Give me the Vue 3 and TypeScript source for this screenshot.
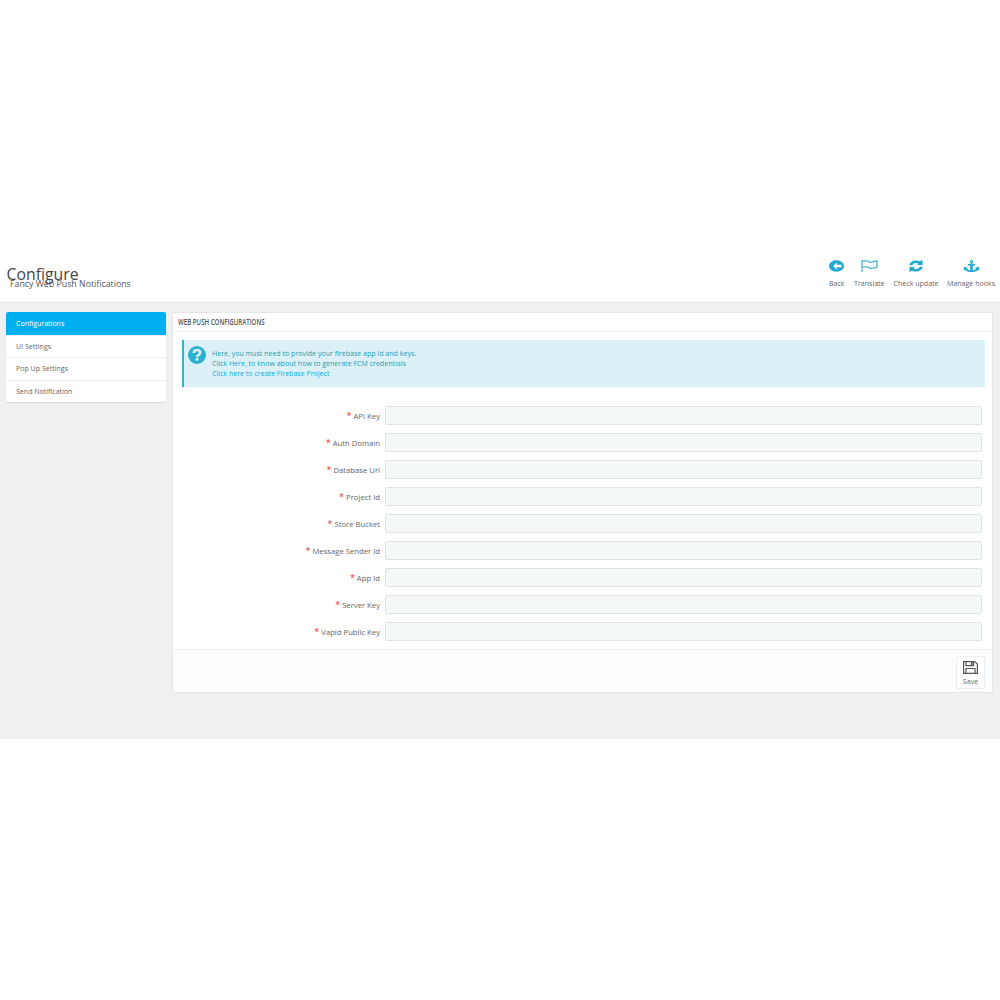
<script setup lang="ts">
const tabs: string[] = ['Configurations', 'UI Settings', 'Pop Up Settings', 'Send Notification']
const fields: string[] = ['API Key', 'Auth Domain', 'Database Url', 'Project Id', 'Store Bucket', 'Message Sender Id', 'App Id', 'Server Key', 'Vapid Public Key']
</script>

<template>
  <div class="page">
    <header class="head">
      <div class="titles">
        <h1>Configure</h1>
        <h2>Fancy Web Push Notifications</h2>
      </div>
      <nav class="actions">
        <a class="act back">
          <svg width="15" height="12" viewBox="0 0 15 12"><path fill="#25a9cf" fill-rule="evenodd" d="M7.500.3c4.200 0 7.500 2.500 7.500 5.700s-3.300 5.700-7.500 5.700S0 9.200 0 6 3.300.3 7.500.3zM7.800 2.600 4.200 6l3.600 3.400V7.300h4.700V4.700H7.800z"/></svg>
          <span>Back</span>
        </a>
        <a class="act translate">
          <svg class="flag" width="17" height="12" viewBox="0 0 17 12"><path fill="none" stroke="#25a9cf" stroke-width="1.100" d="M1 0v12M1 1h6l2 1.500L16 1v6.500l-7 1-2-1.500H1"/></svg>
          <span>Translate</span>
        </a>
        <a class="act check">
          <svg width="16" height="12" viewBox="0 0 16 12"><path fill="#25a9cf" d="M1 5.200C2 2 4.500.4 8 .4c1.700 0 3 .3 4 .9L14.500.1V5H9l1.600-1.400C9.900 3.200 9 3 8 3 6.200 3 5 3.800 4.300 5.200zM15 6.800c-1 3.200-3.500 4.800-7 4.800-1.700 0-3-.3-4-.9L1.500 11.900V7h5.500L5.400 8.400c.7.400 1.600.6 2.600.6 1.800 0 3-.8 3.700-2.200z"/></svg>
          <span>Check update</span>
        </a>
        <a class="act hooks">
          <svg width="17" height="12" viewBox="0 0 17 12"><path fill="#25a9cf" fill-rule="evenodd" d="M8.500 0a1.500 1.500 0 0 1 1 2.700V4H12v1.500H9.800v4.700c1.400-.1 2.600-.7 3.300-1.500L12 7.800 16 6.700l.5 3.800-1.200-.8C14 11.100 11.500 12 8.500 12s-5.500-.9-6.800-2.300l-1.200.8L1 6.700 5 7.800 3.900 8.700c.7.800 1.900 1.400 3.300 1.500V5.500H5V4h2.500V2.700A1.500 1.500 0 0 1 8.500 0zm0 .9a.6.6 0 1 0 0 1.200.6.6 0 0 0 0-1.200z"/></svg>
          <span>Manage hooks</span>
        </a>
      </nav>
    </header>

    <main class="body">
      <ul class="tabs">
        <li v-for="(t, i) in tabs" :key="t" :class="{ active: i === 0 }">{{ t }}</li>
      </ul>

      <section class="panel">
        <h3 class="panel-head"><span>Web Push Configurations</span></h3>
        <div class="alert">
          <svg class="q" width="18" height="18" viewBox="0 0 18 18"><circle cx="9" cy="9" r="9" fill="#2db0d0"/><path fill="none" stroke="#dcf1f7" stroke-width="2.600" d="M5.800 7C5.800 5 7.200 4 9 4s3.200 1 3.200 2.700c0 2.300-3.200 2.300-3.200 4.300"/><rect x="7.600" y="12" width="2.800" height="2.600" fill="#dcf1f7"/></svg>
          <div class="alert-text">
            <p>Here, you must need to provide your firebase app id and keys.</p>
            <p>Click <a>Here</a>, to know about how to generate FCM credentials</p>
            <p><a>Click here to create Firebase Project</a></p>
          </div>
        </div>

        <form class="form">
          <div v-for="f in fields" :key="f" class="row">
            <label><span class="star">*</span> {{ f }}</label>
            <input type="text" />
          </div>
        </form>

        <footer class="foot">
          <button type="button" class="save">
            <svg width="15" height="13" viewBox="0 0 15 13"><path fill="none" stroke="#555" stroke-width="1.200" d="M.6.6h11l2.800 2.400v9.400H.6z"/><path fill="none" stroke="#555" stroke-width="1.200" d="M3 .6v4h7.500v-4M3 12.400V7.500h9v4.900"/><rect x="7.800" y="1.200" width="1.800" height="2.700" fill="#555"/></svg>
            <span>Save</span>
          </button>
        </footer>
      </section>
    </main>
  </div>
</template>

<style>
body { background: #fff; }
</style>

<style scoped>
.page {
  width: 1000px;
  height: 1000px;
  padding-top: 250px;
  box-sizing: border-box;
  font-family: "Open Sans", sans-serif;
  color: #555;
}
.head {
  height: 53px;
  box-sizing: border-box;
  border-bottom: 1px solid #e3e5e7;
  display: flex;
  justify-content: space-between;
}
.titles { padding: 14px 0 0 6.5px; }
h1 {
  margin: 0;
  font-size: 15.800px;
  font-weight: 400;
  line-height: 20px;
  color: #444;
}
h2 {
  margin: -6px 0 0 3.5px;
  font-size: 8.800px;
  font-weight: 400;
  line-height: 12px;
  color: #555;
}
.actions {
  display: flex;
  padding-top: 10px;
}
.act {
  display: flex;
  flex-direction: column;
  align-items: center;
  font-size: 7.050px;
  color: #666;
  line-height: 10px;
  gap: 6px;
}
.act svg { display: block; }
.flag { margin-left: 1px; }
.back { margin-right: 9.500px; }
.translate { margin-right: 9px; }
.check { margin-right: 8.500px; }
.hooks { margin-right: 5px; }
.body {
  height: 436px;
  background: #eef0f2;
  display: flex;
  align-items: flex-start;
  padding: 9px 6px 0;
  box-sizing: border-box;
  gap: 6px;
}
.tabs {
  list-style: none;
  margin: 0;
  padding: 0;
  width: 160px;
  flex: none;
  background: #fff;
  border-radius: 2px;
  box-shadow: 0 1px 1px #d8dadc;
  font-size: 7.050px;
  color: #666;
}
.tabs li {
  height: 22.400px;
  line-height: 20.400px;
  padding-left: 10px;
  box-sizing: border-box;
  border-top: 1px solid #eceef0;
}
.tabs li.active {
  height: 23px;
  line-height: 23px;
  background: #00aff0;
  color: #fff;
  border-top: 0;
  border-radius: 2px 2px 0 0;
}
.panel {
  width: 821px;
  flex: none;
  height: 381px;
  box-sizing: border-box;
  background: #fff;
  border: 1px solid #e4e6e8;
  border-radius: 2px;
  display: flex;
  flex-direction: column;
}
.panel-head {
  margin: 0;
  height: 18px;
  line-height: 17px;
  padding-left: 5px;
  font-size: 8.500px;
  font-weight: 600;
  text-transform: uppercase;
  color: #555;
  border-bottom: 1px solid #f2f3f4;
  white-space: nowrap;
}
.panel-head span {
  display: inline-block;
  transform: scaleX(0.72);
  transform-origin: left center;
}
.alert {
  margin: 8px 7px 0 9px;
  height: 47px;
  flex: none;
  box-sizing: border-box;
  background: #dcf1f7;
  border-left: 2px solid #25b7d3;
  display: flex;
  padding: 6px 0 0 3.500px;
}
.q { flex: none; }
.alert-text {
  margin-left: 6.500px;
  padding-top: 2px;
  font-size: 7.050px;
  line-height: 10px;
  color: #1f9db5;
}
.alert-text p { margin: 0; }
.alert-text a { color: #00aff0; }
.form {
  padding-top: 19px;
  flex: 1;
  display: flex;
  flex-direction: column;
  gap: 8px;
}
.row {
  display: flex;
  align-items: center;
  height: 19px;
}
.row label {
  width: 207px;
  flex: none;
  text-align: right;
  font-size: 7.700px;
  color: #666;
}
.star { color: #e8303a; font-size: 9px; }
.row input {
  margin: 0 0 0 5px;
  padding: 0;
  width: 597px;
  height: 19px;
  box-sizing: border-box;
  background: #f5f8f9;
  border: 1px solid #dfe3e5;
  border-radius: 2px;
}
.foot {
  height: 43px;
  flex: none;
  box-sizing: border-box;
  background: #fcfdfe;
  border-top: 1px solid #eef0f1;
  padding: 6px 7px 0 0;
  display: flex;
  justify-content: flex-end;
}
.save {
  width: 29px;
  height: 33px;
  padding: 4px 0 0;
  box-sizing: border-box;
  background: #fff;
  border: 1px solid #eceeef;
  border-radius: 2px;
  font-family: inherit;
  font-size: 7.050px;
  color: #666;
  display: flex;
  flex-direction: column;
  align-items: center;
  gap: 3px;
  line-height: 9px;
}
.save svg { display: block; }
</style>
